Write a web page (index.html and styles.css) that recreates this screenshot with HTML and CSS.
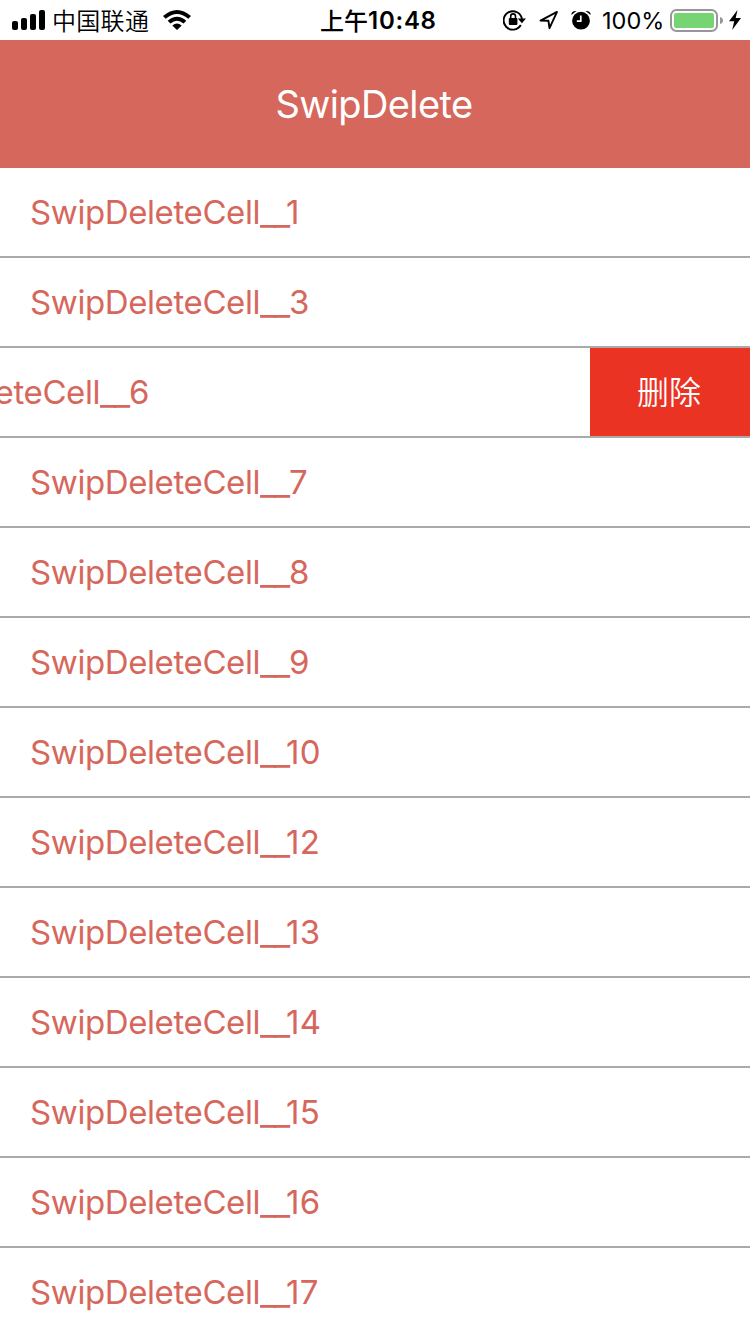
FILE: index.html
```html
<!DOCTYPE html>
<html lang="zh-CN">
<head>
<meta charset="utf-8">
<title>SwipDelete</title>
<link rel="stylesheet" href="styles.css">
</head>
<body>
<div class="screen">
  <header class="status">
    <div class="status-left">
      <svg class="signal" width="33" height="20" viewBox="0 0 33 20"><rect x="0" y="11" width="6" height="9" rx="2"/><rect x="9" y="8" width="6" height="12" rx="2"/><rect x="18" y="4" width="6" height="16" rx="2"/><rect x="27" y="0" width="6" height="20" rx="2"/></svg>
      <span class="carrier">中国联通</span>
      <svg class="wifi" width="28" height="20" viewBox="0 0 28 20"><path d="M0 6Q14-6 28 6L25.3 8.800Q14-.800 2.700 8.800ZM4.700 10.800Q14 2.700 23.300 10.800L20.500 13.600Q14 8 7.500 13.600ZM9.300 15.400Q14 11.400 18.700 15.400L14 20Z"/></svg>
    </div>
    <div class="status-time"><span class="ampm">上午</span><span class="clock">10:48</span></div>
    <div class="status-right">
      <svg class="lock" width="23" height="22" viewBox="0 0 23 22"><path d="M17.800 16A9.200 9.200 0 1 1 18.900 10" fill="none" stroke="#000" stroke-width="1.900"/><path d="M14.800 9.500H23L18.900 14.200Z"/><rect x="5.800" y="9" width="8.600" height="7" rx="1"/><path d="M7.700 9.500V7.300a2.400 2.400 0 0 1 4.800 0V9.500" fill="none" stroke="#000" stroke-width="1.600"/></svg>
      <svg class="location" width="20" height="20" viewBox="0 0 20 20"><path d="M1.500 10.600 18 1.900 10.500 18.200 9.400 10.700Z" fill="none" stroke="#000" stroke-width="1.900" stroke-linejoin="round"/></svg>
      <svg class="alarm" width="20" height="20" viewBox="0 0 20 20"><circle cx="10" cy="10.700" r="8.900"/><path d="M.3 5Q.3 .6 5.500 .9ZM19.700 5Q19.700 .6 14.500 .9Z"/><path d="M9.800 5.500V11.200H5.800" fill="none" stroke="#fff" stroke-width="1.700"/></svg>
      <span class="percent">100%</span>
      <svg class="battery" width="53" height="23" viewBox="0 0 53 23"><rect x="1" y="1" width="46" height="21" rx="5.500" fill="#fff" stroke="#97979b" stroke-width="2"/><rect x="4" y="4" width="40" height="15" rx="2" fill="#76d572"/><path d="M50 8Q53 9 53 11.500T50 15Z" fill="#97979b"/></svg>
      <svg class="bolt" width="12" height="20" viewBox="0 0 12 20"><path d="M8.500 0 0 11.200H5.200L3.200 20 12 8H6.700Z"/></svg>
    </div>
  </header>
  <h1 class="nav"><span>SwipDelete</span></h1>
  <ul class="list">
    <li class="row"><span class="name">SwipDeleteCell</span><span class="dash">__</span><span class="num teen">1</span></li>
    <li class="row"><span class="name">SwipDeleteCell</span><span class="dash">__</span><span class="num">3</span></li>
    <li class="row open"><div class="content"><span class="name">SwipDeleteCell</span><span class="dash">__</span><span class="num">6</span></div><button class="delete">删除</button></li>
    <li class="row"><span class="name">SwipDeleteCell</span><span class="dash">__</span><span class="num">7</span></li>
    <li class="row"><span class="name">SwipDeleteCell</span><span class="dash">__</span><span class="num">8</span></li>
    <li class="row"><span class="name">SwipDeleteCell</span><span class="dash">__</span><span class="num">9</span></li>
    <li class="row"><span class="name">SwipDeleteCell</span><span class="dash">__</span><span class="num teen">10</span></li>
    <li class="row"><span class="name">SwipDeleteCell</span><span class="dash">__</span><span class="num teen">12</span></li>
    <li class="row"><span class="name">SwipDeleteCell</span><span class="dash">__</span><span class="num teen">13</span></li>
    <li class="row"><span class="name">SwipDeleteCell</span><span class="dash">__</span><span class="num teen">14</span></li>
    <li class="row"><span class="name">SwipDeleteCell</span><span class="dash">__</span><span class="num teen">15</span></li>
    <li class="row"><span class="name">SwipDeleteCell</span><span class="dash">__</span><span class="num teen">16</span></li>
    <li class="row"><span class="name">SwipDeleteCell</span><span class="dash">__</span><span class="num teen">17</span></li>
  </ul>
</div>
</body>
</html>
```
FILE: styles.css
```css
* { box-sizing: border-box; }
body { margin: 0; background: #fff; font-family: Inter, "Noto Sans CJK SC", sans-serif; }
.screen { width: 750px; height: 1334px; overflow: hidden; display: flex; flex-direction: column; }
.status { height: 40px; flex: none; display: grid; grid-template-columns: 320px 1fr 248px; align-items: center; color: #000; font-size: 24px; line-height: 40px; white-space: nowrap; }
.status svg { display: block; flex: none; }
.status-left { display: flex; align-items: center; padding-left: 12px; }
.carrier { width: 96px; margin-left: 7px; font-family: "Noto Sans CJK SC", sans-serif; font-weight: 350; letter-spacing: .3px; }
.wifi { margin-left: 15px; }
.status-time { display: flex; }
.ampm { font-family: "Noto Sans CJK SC", sans-serif; font-weight: 500; }
.clock { padding-top: 2px; line-height: 38px; font-weight: 600; font-size: 24px; letter-spacing: .75px; }
.status-right { display: flex; align-items: center; }
.lock { margin-left: 1px; }
.location { margin-left: 13px; }
.alarm { margin-left: 12px; }
.percent { width: 62px; margin-left: 11px; padding-top: 2px; line-height: 38px; font-size: 23.500px; }
.battery { margin-left: 6px; }
.bolt { margin-left: 6px; }
.nav { height: 128px; flex: none; margin: 0; padding-right: 2px; background: #d6675c; color: #fff; display: flex; align-items: center; justify-content: center; font-size: 38px; font-weight: 400; line-height: 48px; letter-spacing: -.6px; }
.list { margin: 0; padding: 0; list-style: none; }
.row { height: 90px; display: flex; align-items: center; padding-left: 30px; border-bottom: 2px solid #aaa; color: #d6675c; font-size: 33px; line-height: 88px; white-space: nowrap; }
.row.open { padding: 0; }
.name { width: 230px; flex: none; letter-spacing: -.4px; }
.dash { width: 30px; flex: none; padding-top: 2px; line-height: 86px; letter-spacing: -2px; transform: scaleX(1.07); transform-origin: left; }
.num { letter-spacing: -.6px; }
.num:not(.teen) { margin-left: -1px; }
.teen { margin-left: -4px; letter-spacing: .3px; }
.content { width: 590px; height: 88px; flex: none; display: flex; justify-content: flex-start; overflow: hidden; }
.content .name { margin-left: -130px; }
.delete { width: 160px; height: 88px; border: 0; padding: 0 2px 3px 0; background: #ea3323; color: #fff; font: 350 32px/85px "Noto Sans CJK SC", sans-serif; }
```
